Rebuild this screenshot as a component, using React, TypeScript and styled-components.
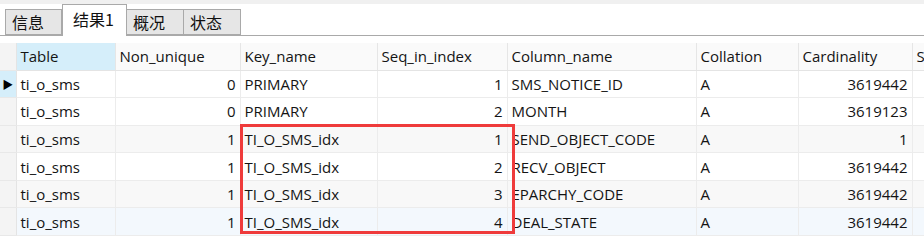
import React from 'react';
import styled, { createGlobalStyle } from 'styled-components';

const GlobalStyle = createGlobalStyle`
  html, body {
    margin: 0;
    padding: 0;
    background: #ffffff;
  }
  body {
    font-family: 'Open Sans', 'Noto Sans CJK SC', sans-serif;
    font-size: 15px;
    color: #141414;
  }
`;

const Page = styled.div`
  width: 924px;
  height: 240px;
  overflow: hidden;
  background: #ffffff;
  border-top: 4px solid #f0f0f0;
  box-sizing: border-box;
`;

const TabBar = styled.div`
  display: flex;
  align-items: flex-end;
  height: 32px;
  padding-left: 5px;
  border-bottom: 1px solid #a9a9a9;
  box-sizing: border-box;
`;

const Tab = styled.div<{ active?: boolean }>`
  display: flex;
  align-items: center;
  box-sizing: border-box;
  height: ${({ active }) => (active ? 32 : 26)}px;
  width: ${({ active }) => (active ? 65 : 57)}px;
  margin-bottom: ${({ active }) => (active ? -1 : 0)}px;
  padding: ${({ active }) => (active ? '0 0 4px 10px' : '0 0 0 6px')};
  background: ${({ active }) => (active ? '#ffffff' : '#e6e6e6')};
  border: 1px solid #a9a9a9;
  border-bottom: ${({ active }) => (active ? 'none' : '1px solid #a9a9a9')};
  border-left: ${({ active }) => (active ? '1px solid #a9a9a9' : 'none')};
  &:first-child {
    border-left: 1px solid #a9a9a9;
  }
  font-family: 'Noto Sans CJK SC', sans-serif;
  font-size: 16px;
  color: #111;
`;

const GridWrap = styled.div`
  position: relative;
  margin-top: 7px;
`;

const Grid = styled.table`
  border-collapse: collapse;
  table-layout: fixed;
  width: 940px;
`;

const HeadCell = styled.th<{ selected?: boolean }>`
  height: 27px;
  padding: 0 4px;
  text-align: left;
  font-weight: normal;
  white-space: nowrap;
  overflow: hidden;
  background: ${({ selected }) => (selected ? '#d5eefa' : '#fafafa')};
  border-right: 1px solid #e6e6e6;
  border-bottom: 1px solid #e4e4e4;
  box-sizing: border-box;
`;

const Row = styled.tr<{ tone: 'white' | 'grey' | 'blue' }>`
  height: 27.6px;
  background: ${({ tone }) =>
    tone === 'grey' ? '#f8f8f8' : tone === 'blue' ? '#f3f8fd' : '#ffffff'};
`;

const Cell = styled.td<{ num?: boolean }>`
  padding: 0 4px;
  text-align: ${({ num }) => (num ? 'right' : 'left')};
  white-space: nowrap;
  overflow: hidden;
  border-right: 1px solid #ececec;
  border-bottom: 1px solid #ececec;
  box-sizing: border-box;
`;

const Marker = styled.td<{ current?: boolean }>`
  padding: 0;
  background: ${({ current }) => (current ? '#d5eefa' : '#f4f4f4')};
  border-right: 1px solid #e4e4e4;
  border-bottom: 1px solid #e8e8e8;
  text-align: center;
  font-size: 11px;
  color: #000;
`;

const Highlight = styled.div`
  position: absolute;
  left: 240px;
  top: 81px;
  width: 275px;
  height: 110px;
  border: 3px solid #ef3b3b;
  box-sizing: border-box;
  pointer-events: none;
`;

const columns = [
  { name: 'Table', width: 99 },
  { name: 'Non_unique', width: 125, num: true },
  { name: 'Key_name', width: 137 },
  { name: 'Seq_in_index', width: 130, num: true },
  { name: 'Column_name', width: 189 },
  { name: 'Collation', width: 102 },
  { name: 'Cardinality', width: 114, num: true },
  { name: 'Sub_part', width: 28 },
];

const rows: { cells: string[]; tone: 'white' | 'grey' | 'blue' }[] = [
  { cells: ['ti_o_sms', '0', 'PRIMARY', '1', 'SMS_NOTICE_ID', 'A', '3619442', ''], tone: 'white' },
  { cells: ['ti_o_sms', '0', 'PRIMARY', '2', 'MONTH', 'A', '3619123', ''], tone: 'white' },
  { cells: ['ti_o_sms', '1', 'TI_O_SMS_idx', '1', 'SEND_OBJECT_CODE', 'A', '1', ''], tone: 'grey' },
  { cells: ['ti_o_sms', '1', 'TI_O_SMS_idx', '2', 'RECV_OBJECT', 'A', '3619442', ''], tone: 'white' },
  { cells: ['ti_o_sms', '1', 'TI_O_SMS_idx', '3', 'EPARCHY_CODE', 'A', '3619442', ''], tone: 'grey' },
  { cells: ['ti_o_sms', '1', 'TI_O_SMS_idx', '4', 'DEAL_STATE', 'A', '3619442', ''], tone: 'blue' },
];

export default function App() {
  return (
    <>
      <GlobalStyle />
      <Page>
        <TabBar>
          <Tab>信息</Tab>
          <Tab active>结果1</Tab>
          <Tab>概况</Tab>
          <Tab>状态</Tab>
        </TabBar>
        <GridWrap>
          <Grid>
            <colgroup>
              <col style={{ width: 16 }} />
              {columns.map((c) => (
                <col key={c.name} style={{ width: c.width }} />
              ))}
            </colgroup>
            <thead>
              <tr>
                <Marker as="th" />
                {columns.map((c, i) => (
                  <HeadCell key={c.name} selected={i === 0}>
                    {c.name}
                  </HeadCell>
                ))}
              </tr>
            </thead>
            <tbody>
              {rows.map((r, ri) => (
                <Row key={ri} tone={r.tone}>
                  <Marker current={ri === 0}>{ri === 0 ? '▶' : ''}</Marker>
                  {r.cells.map((v, ci) => (
                    <Cell key={ci} num={columns[ci].num}>
                      {v}
                    </Cell>
                  ))}
                </Row>
              ))}
            </tbody>
          </Grid>
          <Highlight />
        </GridWrap>
      </Page>
    </>
  );
}
